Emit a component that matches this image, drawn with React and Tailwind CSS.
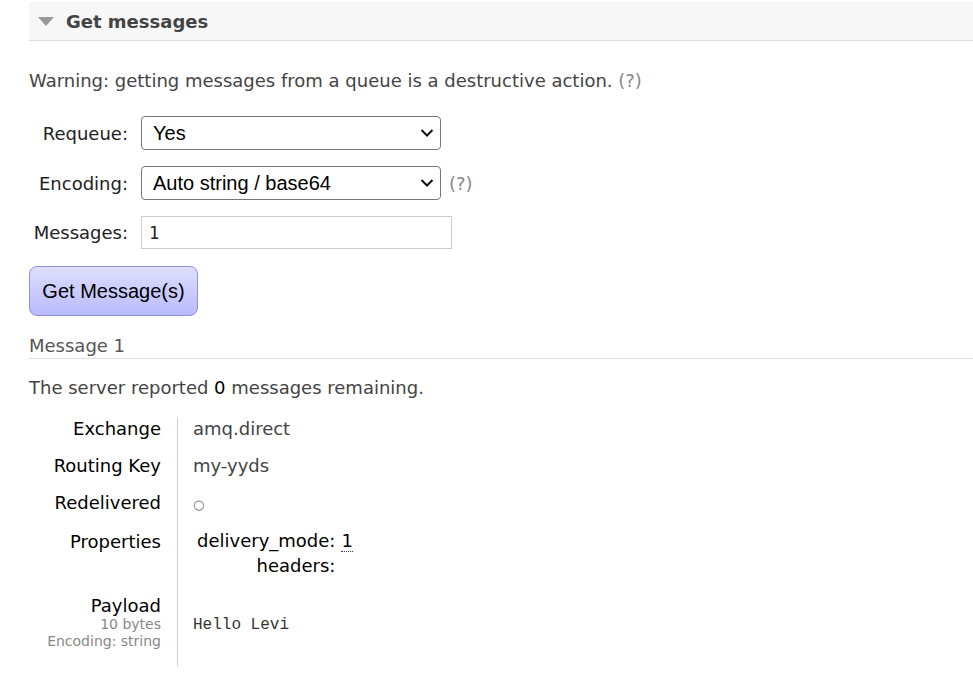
import { useState } from 'react';

const Chevron = () => (
    <svg
        width="14"
        height="9"
        viewBox="0 0 14 9"
        className="pointer-events-none absolute right-[7px] top-1/2 -translate-y-1/2"
    >
        <path d="M1.5 1.5 L7 7 L12.5 1.5" fill="none" stroke="#111" strokeWidth="2" />
    </svg>
);

const SelectBox = ({ value, options, onChange }) => (
    <div className="relative w-[300px] h-[34px]">
        <select
            value={value}
            onChange={(e) => onChange(e.target.value)}
            className="appearance-none w-full h-full rounded-[4px] border border-[#767676] bg-white pl-[11px] pr-8 text-[20px] text-black outline-none"
            style={{ fontFamily: '"Liberation Sans", Arial, sans-serif' }}
        >
            {options.map((o) => (
                <option key={o}>{o}</option>
            ))}
        </select>
        <Chevron />
    </div>
);

const FormRow = ({ label, children }) => (
    <div className="flex items-center">
        <label className="w-[99px] text-right text-[#222]">{label}</label>
        <div className="ml-[13px] flex items-center">{children}</div>
    </div>
);

const InfoRow = ({ label, children, center = false }) => (
    <div className={`flex ${center ? 'items-center' : 'items-start'}`}>
        <div className="w-[132px] pb-[16px] text-right text-black">{label}</div>
        <div
            className={`ml-[16px] self-stretch border-l border-[#ccc] pl-[15px] pb-[16px] ${center ? 'flex items-center pt-[6px]' : ''}`}
        >
            {children}
        </div>
    </div>
);

export default function App() {
    const [requeue, setRequeue] = useState('Yes');
    const [encoding, setEncoding] = useState('Auto string / base64');
    const [count, setCount] = useState('1');

    return (
        <div
            className="w-full h-[693px] bg-white pl-[29px] text-[18px] leading-[21px] text-[#444]"
            style={{ fontFamily: '"DejaVu Sans", Verdana, sans-serif' }}
        >
            {/* Section header */}
            <div className="pt-[2px]">
                <div className="h-[39px] bg-[#f7f7f7] border-b border-[#ddd] flex items-center">
                    <span className="ml-[9px] w-0 h-0 border-l-[8px] border-r-[8px] border-t-[9px] border-l-transparent border-r-transparent border-t-[#999]" />
                    <h2 className="ml-[12px] text-[18px] font-bold text-[#444]">Get messages</h2>
                </div>
            </div>

            <p className="mt-[29px]">
                Warning: getting messages from a queue is a destructive action.{' '}
                <span className="text-[#888]">(?)</span>
            </p>

            <div className="mt-[25px] flex flex-col gap-[16px]">
                <FormRow label="Requeue:">
                    <SelectBox value={requeue} options={['Yes', 'No']} onChange={setRequeue} />
                </FormRow>
                <FormRow label="Encoding:">
                    <SelectBox
                        value={encoding}
                        options={['Auto string / base64', 'base64']}
                        onChange={setEncoding}
                    />
                    <span className="ml-[8px] text-[#888]">(?)</span>
                </FormRow>
                <FormRow label="Messages:">
                    <input
                        value={count}
                        onChange={(e) => setCount(e.target.value)}
                        className="w-[311px] h-[33px] border border-[#ccc] bg-white px-[7px] text-[17px] text-[#222] outline-none"
                        style={{ fontFamily: '"DejaVu Sans Mono", monospace' }}
                    />
                </FormRow>
            </div>

            <button
                type="button"
                className="mt-[17px] w-[169px] h-[50px] rounded-[8px] border border-[#8f8fe6] bg-gradient-to-b from-[#dedeff] to-[#babaff] text-[20px] text-black"
                style={{ fontFamily: '"Liberation Sans", Arial, sans-serif' }}
            >
                Get Message(s)
            </button>

            <h3 className="mt-[19px] pb-[2px] border-b border-[#ddd] text-[#555]">Message 1</h3>

            <p className="mt-[18px]">
                The server reported <span className="text-black">0</span> messages remaining.
            </p>

            {/* Message details */}
            <div className="mt-[20px] flex flex-col">
                <InfoRow label="Exchange">amq.direct</InfoRow>
                <InfoRow label="Routing Key">my-yyds</InfoRow>
                <InfoRow label="Redelivered">
                    <span className="text-[13px] text-[#666]">○</span>
                </InfoRow>
                <InfoRow label="Properties">
                    <div className="grid grid-cols-[auto_auto] gap-x-[6px] gap-y-[3px] pl-[4px] -mt-[1px] pb-[3px] text-black">
                        <span className="text-right">delivery_mode:</span>
                        <abbr className="no-underline border-b border-dotted border-[#444]" title="transient">1</abbr>
                        <span className="text-right">headers:</span>
                        <span />
                    </div>
                </InfoRow>
                <InfoRow
                    center
                    label={
                        <div>
                            <div>Payload</div>
                            <div className="text-[14px] leading-[17px] text-[#888]">10 bytes</div>
                            <div className="text-[14px] leading-[17px] text-[#888]">Encoding: string</div>
                        </div>
                    }
                >
                    <pre
                        className="text-[16px] text-[#333]"
                        style={{ fontFamily: '"Liberation Mono", "Courier New", monospace' }}
                    >
                        Hello Levi
                    </pre>
                </InfoRow>
            </div>
        </div>
    );
}
